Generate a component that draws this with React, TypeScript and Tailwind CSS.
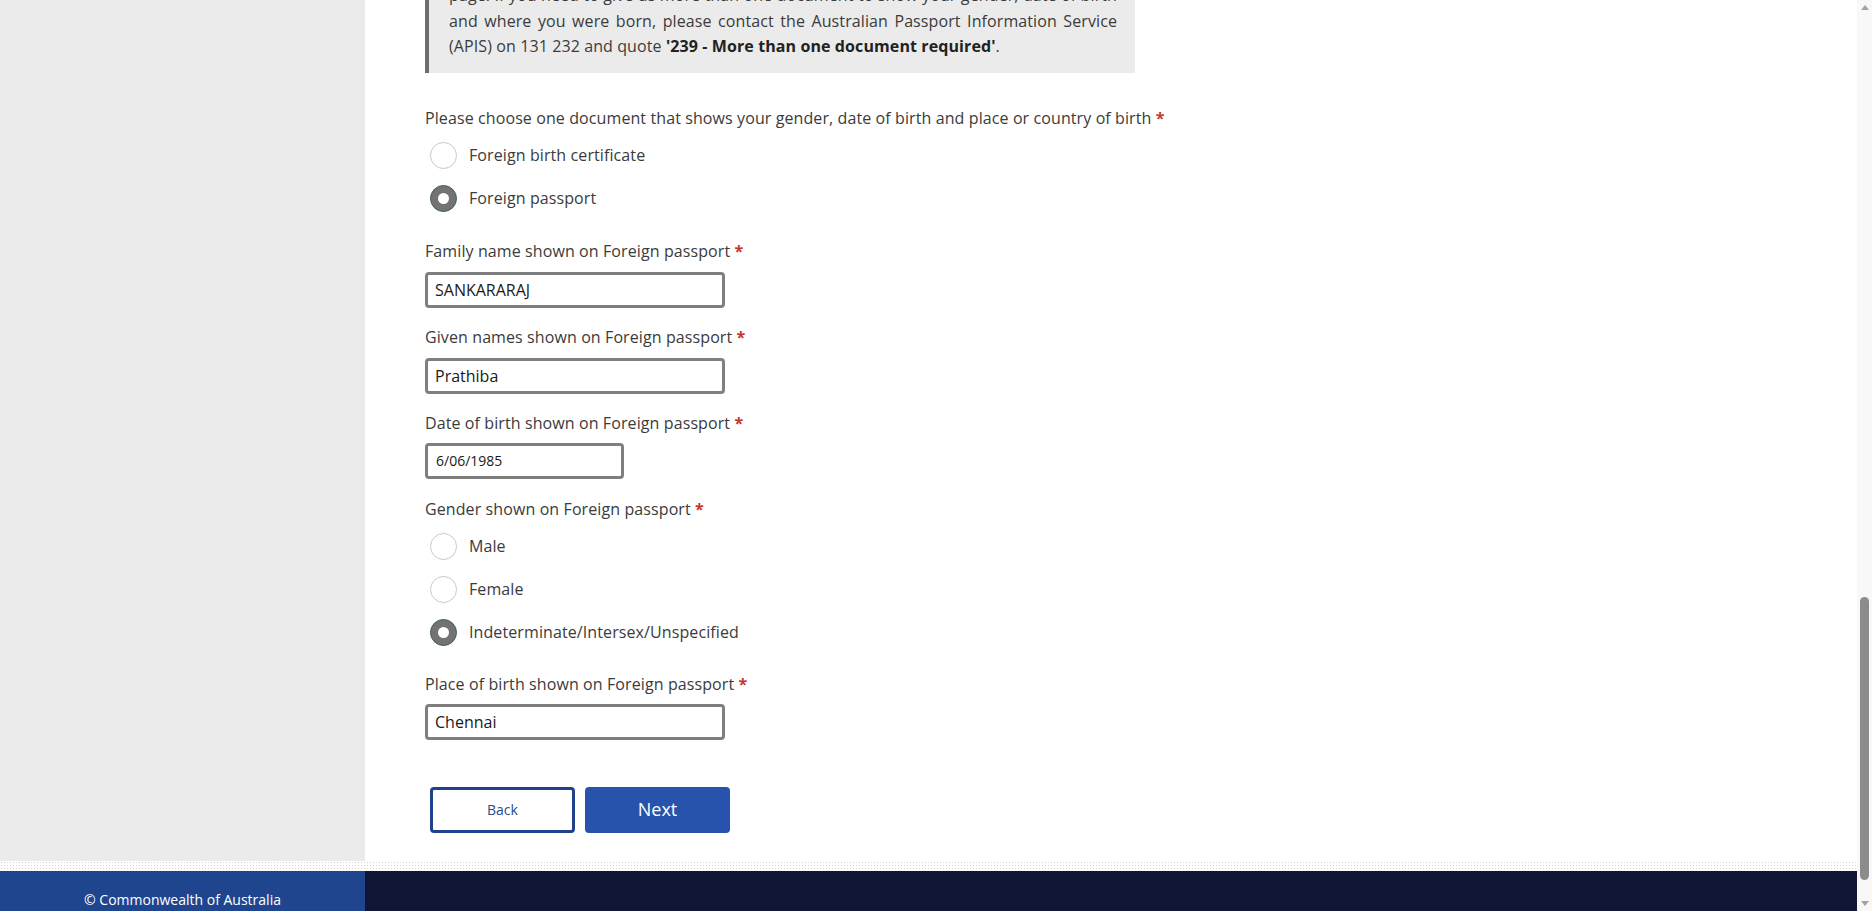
import React from 'react';

interface RadioProps {
    label: string;
    checked?: boolean;
}

function Radio({ label, checked = false }: RadioProps) {
    return (
        <label className="flex items-center gap-3 ml-[5px] h-[27px]">
            {checked ? (
                <span className="w-[27px] h-[27px] rounded-full bg-[#737373] border border-[#3d5c69] flex items-center justify-center shrink-0">
                    <span className="w-[11px] h-[11px] rounded-full bg-white" />
                </span>
            ) : (
                <span className="w-[27px] h-[27px] rounded-full bg-white border border-[#c9c9c9] shrink-0" />
            )}
            <span className="text-[16px] leading-[24px] tracking-[0.1px] text-[#3b3b3b]">{label}</span>
        </label>
    );
}

function FieldLabel({ children, className = '' }: { children: React.ReactNode; className?: string }) {
    return (
        <p className={`text-[16px] leading-[24px] tracking-[0.1px] text-[#3b3b3b] ${className}`}>
            {children} <span className="text-[#c8352a] font-bold">*</span>
        </p>
    );
}

function TextField({ value, className = '' }: { value: string; className?: string }) {
    return (
        <input
            type="text"
            defaultValue={value}
            className={`block w-[300px] h-[36px] border-[3px] border-[#7f7f7f] rounded-[4px] px-[7px] text-[16px] text-[#1a1a1a] bg-white outline-none ${className}`}
        />
    );
}

export default function App() {
    return (
        <div className="h-[911px] w-full flex overflow-hidden bg-white font-['Open_Sans',sans-serif]">
            <div className="flex-1 flex flex-col min-w-0">
                <div className="flex h-[861px] shrink-0">
                    <aside className="w-[365px] shrink-0 bg-[#ebebeb]" />

                    <main className="flex-1 bg-white pl-[60px] overflow-hidden">
                        {/* page is scrolled down: the top of the info box is out of view */}
                        <div className="-mt-[84px]">
                            <div className="w-[710px] bg-[#ebebeb] border-l-4 border-[#6d6d6d] pl-[20px] pr-[18px] pt-[16px] pb-[13px]">
                                <p className="text-[16px] leading-[25.6px] tracking-[0.1px] text-[#3b3b3b] text-justify">
                                    You have told us that you were born outside Australia.
                                    <br />
                                    You can only choose one document type on this
                                    <br />
                                    page. If you need to give us more than one document to show your gender, date of birth and where you were born, please contact the Australian Passport Information Service (APIS) on 131 232 and quote <strong className="font-bold text-[#222]">'239 - More than one document required'</strong>.
                                </p>
                            </div>

                            <FieldLabel className="mt-[33px]">
                                Please choose one document that shows your gender, date of birth and place or country of birth
                            </FieldLabel>
                            <div className="mt-[12px] flex flex-col gap-[16px]">
                                <Radio label="Foreign birth certificate" />
                                <Radio label="Foreign passport" checked />
                            </div>

                            <FieldLabel className="mt-[27px]">Family name shown on Foreign passport</FieldLabel>
                            <TextField value="SANKARARAJ" className="mt-[9px]" />

                            <FieldLabel className="mt-[17px]">Given names shown on Foreign passport</FieldLabel>
                            <TextField value="Prathiba" className="mt-[9px]" />

                            <FieldLabel className="mt-[17px]">Date of birth shown on Foreign passport</FieldLabel>
                            <input
                                type="text"
                                defaultValue="6/06/1985"
                                className="block mt-[8px] w-[199px] h-[36px] border-[3px] border-[#7f7f7f] rounded-[4px] px-[8px] text-[14px] text-[#1a1a1a] bg-white outline-none"
                            />

                            <FieldLabel className="mt-[18px]">Gender shown on Foreign passport</FieldLabel>
                            <div className="mt-[12px] flex flex-col gap-[16px]">
                                <Radio label="Male" />
                                <Radio label="Female" />
                                <Radio label="Indeterminate/Intersex/Unspecified" checked />
                            </div>

                            <FieldLabel className="mt-[26px]">Place of birth shown on Foreign passport</FieldLabel>
                            <TextField value="Chennai" className="mt-[8px]" />

                            <div className="mt-[47px] ml-[5px] flex gap-[10px]">
                                <button className="w-[145px] h-[46px] border-[3px] border-[#21418c] rounded-[4px] bg-white text-[14px] text-[#2e4c8e]">
                                    Back
                                </button>
                                <button className="w-[145px] h-[46px] rounded-[4px] bg-[#2753ad] text-[18px] font-medium text-white">
                                    Next
                                </button>
                            </div>
                        </div>
                    </main>
                </div>

                {/* dotted divider */}
                <div className="h-[10px] shrink-0 bg-white bg-[radial-gradient(circle,#d2d2d2_0.8px,transparent_1px)] bg-[length:3px_3px]" />

                <footer className="flex flex-1">
                    <div className="w-[365px] shrink-0 bg-[#1f458f] pt-[19px] text-center text-[14px] leading-[20px] text-white">
                        © Commonwealth of Australia
                    </div>
                    <div className="flex-1 bg-[#111634]" />
                </footer>
            </div>

            {/* scrollbar */}
            <div className="w-[15px] shrink-0 bg-[#f8f8f8] flex flex-col">
                <div className="h-[15px] flex items-center justify-center">
                    <div className="w-0 h-0 border-x-[4px] border-x-transparent border-b-[5px] border-b-[#a3a3a3]" />
                </div>
                <div className="flex-1 flex flex-col justify-end items-center pb-[16px]">
                    <div className="w-[9px] h-[283px] rounded-full bg-[#8c8c8c]" />
                </div>
                <div className="h-[15px] flex items-center justify-center">
                    <div className="w-0 h-0 border-x-[4px] border-x-transparent border-t-[5px] border-t-[#a3a3a3]" />
                </div>
            </div>
        </div>
    );
}
